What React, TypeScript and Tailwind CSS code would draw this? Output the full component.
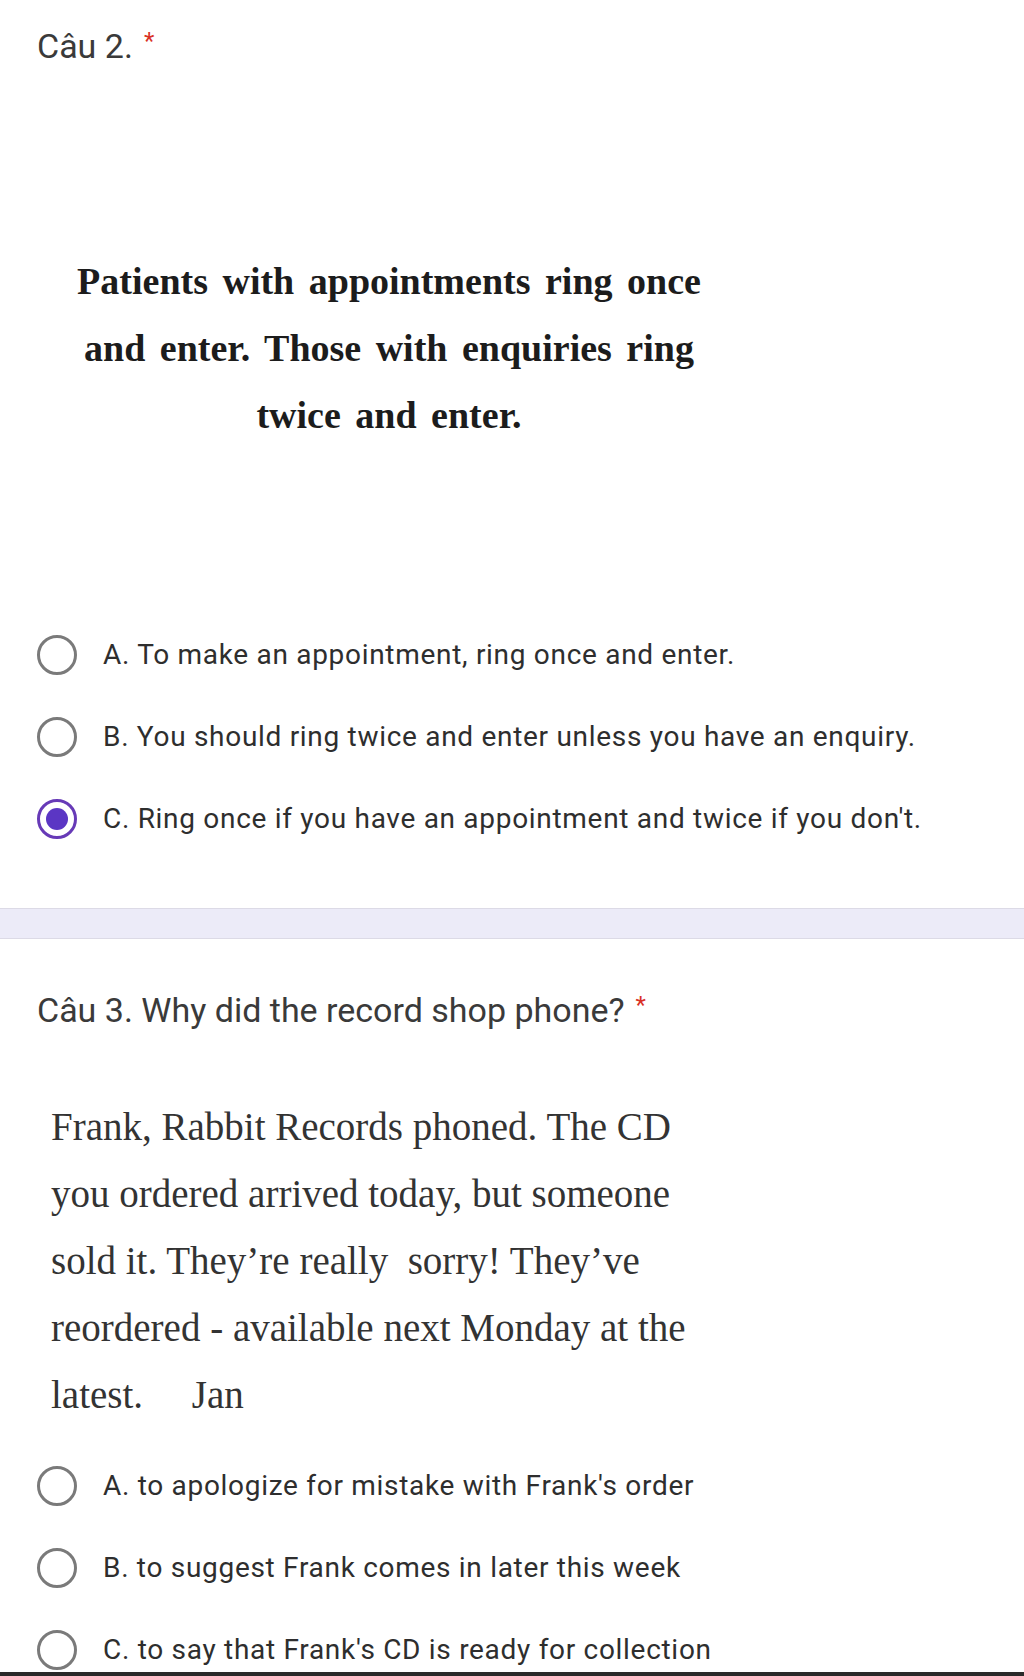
import React from 'react';

type TOption = {
    label: string;
    checked?: boolean;
};

const q2Options: TOption[] = [
    { label: "A. To make an appointment, ring once and enter." },
    { label: "B. You should ring twice and enter unless you have an enquiry." },
    { label: "C. Ring once if you have an appointment and twice if you don't.", checked: true },
];

const q3Options: TOption[] = [
    { label: "A. to apologize for mistake with Frank's order" },
    { label: "B. to suggest Frank comes in later this week" },
    { label: "C. to say that Frank's CD is ready for collection" },
];

const sans = "font-['Roboto','Liberation_Sans',sans-serif]";
const serif = "font-['Liberation_Serif','Times_New_Roman',serif]";

function Radio({ checked }: { checked?: boolean }) {
    if (checked) {
        return (
            <div className="w-10 h-10 shrink-0 rounded-full border-[3px] border-[#673ab7] flex items-center justify-center">
                <div className="w-[22px] h-[22px] rounded-full bg-[#5b36c4]"></div>
            </div>
        );
    }
    return <div className="w-10 h-10 shrink-0 rounded-full border-[3px] border-[#7a7a7a]"></div>;
}

function OptionList({ options }: { options: TOption[] }) {
    return (
        <div className="flex flex-col">
            {options.map((o) => (
                <div key={o.label} className="h-[82px] shrink-0 flex items-center pl-[37px]">
                    <Radio checked={o.checked} />
                    <span className={`${sans} ml-[26px] text-[28px] text-[#2e2e2e] tracking-[0.7px]`}>{o.label}</span>
                </div>
            ))}
        </div>
    );
}

function Title({ children }: { children: React.ReactNode }) {
    return (
        <div className={`${sans} pl-[37px] text-[34px] leading-[40px] text-[#3a3a3a]`}>
            {children}
            <span className="inline-block align-top ml-[11px] text-[24px] leading-[30px] text-[#d93025]">*</span>
        </div>
    );
}

export default function App() {
    return (
        <div className="w-[1024px] h-[1676px] bg-white flex flex-col overflow-hidden">
            <div className="h-[1672px] shrink-0 overflow-hidden">
                {/* Câu 2 */}
                <div className="pt-[26px]">
                    <Title>Câu 2.</Title>
                </div>

                <div className={`${serif} mt-[182px] ml-[37px] w-[704px] text-center font-bold text-[38px] leading-[67px] text-[#1c1c1c] [word-spacing:5px]`}>
                    Patients with appointments ring once
                    <br />
                    and enter. Those with enquiries ring
                    <br />
                    twice and enter.
                </div>

                <div className="mt-[165px]">
                    <OptionList options={q2Options} />
                </div>

                <div className="mt-[48px] h-[31px] bg-[#ecebf8] border-y border-[#dcdae6]"></div>

                {/* Câu 3 */}
                <div className="mt-[51px]">
                    <Title>Câu 3. Why did the record shop phone?</Title>
                </div>

                <div className={`${serif} mt-[63px] pl-[51px] text-[39px] leading-[67px] text-[#333333]`}>
                    Frank, Rabbit Records phoned. The CD
                    <br />
                    you ordered arrived today, but someone
                    <br />
                    sold it. They’re really&nbsp; sorry! They’ve
                    <br />
                    reordered - available next Monday at the
                    <br />
                    latest.&nbsp;&nbsp;&nbsp;&nbsp; Jan
                </div>

                <div className="mt-[17px]">
                    <OptionList options={q3Options} />
                </div>
            </div>
            <div className="h-1 shrink-0 bg-[#2a2a2a]"></div>
        </div>
    );
}
